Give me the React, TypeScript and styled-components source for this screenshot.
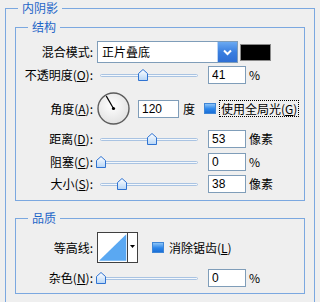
import styled, { createGlobalStyle } from 'styled-components';

const GlobalStyle = createGlobalStyle`
  html, body {
    margin: 0;
    padding: 0;
    background: #efefef;
    overflow: hidden;
  }
  body {
    font-family: "Noto Sans CJK SC", "Liberation Sans", sans-serif;
    font-size: 12px;
    line-height: 16px;
    color: #000;
  }
`;

const Page = styled.div`
  width: 320px;
  height: 302px;
  padding: 0 5px;
  box-sizing: border-box;
  overflow: hidden;
`;

const Group = styled.fieldset<{ $outer?: boolean }>`
  margin: 0;
  padding: 0;
  border: 1px solid #7ba8e0;
  min-width: 0;
  height: ${(p) => (p.$outer ? '304px' : 'auto')};
  box-sizing: border-box;
`;

const Legend = styled.legend`
  margin-left: 12px;
  padding: 0 4px;
  color: #1f66c8;
  font-size: 12px;
  line-height: 16px;
`;

const OuterBody = styled.div`
  display: flex;
  flex-direction: column;
  gap: 9px;
  padding: 3px 9px 0 9px;
`;

const Rows = styled.div<{ $top: number; $bottom: number }>`
  display: flex;
  flex-direction: column;
  padding: ${(p) => `${p.$top}px 0 ${p.$bottom}px 0`};
`;

const Row = styled.div<{ $gap?: number }>`
  display: flex;
  align-items: center;
  margin-top: ${(p) => p.$gap ?? 0}px;
`;

const Label = styled.div`
  width: 77px;
  margin-right: 4px;
  text-align: right;
  white-space: nowrap;
`;

const Key = styled.span`
  text-decoration: underline;
`;

const Select = styled.div`
  display: flex;
  width: 141px;
  height: 22px;
  box-sizing: border-box;
  border: 1px solid #7f9db9;
  background: #fff;
`;

const SelectText = styled.div`
  flex: 1;
  padding-left: 4px;
  line-height: 20px;
`;

const SelectButton = styled.div`
  width: 19px;
  display: flex;
  align-items: center;
  justify-content: center;
  background: linear-gradient(#6aa9f2, #3a7fe0 50%, #2f6fd4);
  border-left: 1px solid #b9d4f5;
`;

const Swatch = styled.div`
  width: 31px;
  height: 17px;
  margin-left: 2px;
  box-sizing: border-box;
  border: 1px solid #8a8a8a;
  background: #000;
`;

const SliderBox = styled.div`
  position: relative;
  width: 111px;
  height: 18px;
`;

const Track = styled.div`
  position: absolute;
  left: 3px;
  right: 10px;
  top: 8px;
  height: 3px;
  box-sizing: border-box;
  border: 1px solid #a9c3e2;
  border-radius: 2px;
  background: #f4f8fc;
`;

const Thumb = styled.svg`
  position: absolute;
  top: -6px;
  margin-left: -5px;
`;

const NumBox = styled.input<{ $w?: number }>`
  width: ${(p) => p.$w ?? 38}px;
  height: 18px;
  box-sizing: border-box;
  margin: 0;
  padding: 0 0 0 3px;
  border: 1px solid #7f9db9;
  background: #fff;
  font-family: "Liberation Sans", Arial, sans-serif;
  font-size: 12px;
  color: #000;
  outline: none;
`;

const Unit = styled.span<{ $ml?: number }>`
  margin-left: ${(p) => p.$ml ?? 3}px;
  white-space: nowrap;
`;

const Dial = styled.svg`
  display: block;
  margin-right: 8px;
`;

const Check = styled.div<{ $ml: number }>`
  width: 12px;
  height: 11px;
  margin-left: ${(p) => p.$ml}px;
  box-sizing: border-box;
  border: 1px solid #3f86d6;
  background: linear-gradient(#8cc4f7, #2c86ea 55%, #1b6fd6);
`;

const CheckLabel = styled.span<{ $focus?: boolean }>`
  margin-left: 3px;
  padding: 0 1px;
  border: 1px ${(p) => (p.$focus ? 'dotted #000' : 'solid transparent')};
  white-space: nowrap;
  line-height: 15px;
`;

const Contour = styled.div`
  display: flex;
  width: 41px;
  height: 31px;
  box-sizing: border-box;
  border: 1px solid #404040;
  background: #fff;
`;

const ContourGraph = styled.svg`
  display: block;
`;

const ContourArrow = styled.div`
  width: 10px;
  border-left: 1px solid #404040;
  display: flex;
  justify-content: center;
  padding-top: 12px;
  box-sizing: border-box;
`;

const SliderControl = ({ value, max }: { value: number; max: number }) => (
  <SliderBox>
    <Track>
      <Thumb width="10" height="12" viewBox="0 0 10 12" style={{ left: `${(value / max) * 100}%` }}>
        <defs>
          <linearGradient id="tg" x1="0" y1="0" x2="0" y2="1">
            <stop offset="0" stopColor="#ffffff" />
            <stop offset="1" stopColor="#b6d5f6" />
          </linearGradient>
        </defs>
        <path d="M0.5 4.5 L5 0.5 L9.5 4.5 V11.5 H0.5 Z" fill="url(#tg)" stroke="#2f73d2" />
      </Thumb>
    </Track>
  </SliderBox>
);

export default function App() {
  return (
    <Page>
      <GlobalStyle />
      <Group $outer>
        <Legend>内阴影</Legend>
        <OuterBody>
          <Group>
            <Legend>结构</Legend>
            <Rows $top={6} $bottom={7}>
              <Row>
                <Label>混合模式:</Label>
                <Select>
                  <SelectText>正片叠底</SelectText>
                  <SelectButton>
                    <svg width="9" height="7" viewBox="0 0 9 7">
                      <path d="M1 1.5 L4.5 5 L8 1.5" fill="none" stroke="#fff" strokeWidth="2" />
                    </svg>
                  </SelectButton>
                </Select>
                <Swatch />
              </Row>
              <Row $gap={3}>
                <Label>
                  不透明度(<Key>O</Key>):
                </Label>
                <SliderControl value={44} max={100} />
                <NumBox readOnly value="41" />
                <Unit>%</Unit>
              </Row>
              <Row $gap={8}>
                <Label>
                  角度(<Key>A</Key>):
                </Label>
                <Dial width="33" height="33" viewBox="0 0 33 33">
                  <defs>
                    <radialGradient id="dg" cx="0.45" cy="0.4" r="0.6">
                      <stop offset="0" stopColor="#ffffff" />
                      <stop offset="1" stopColor="#e2e2e2" />
                    </radialGradient>
                  </defs>
                  <circle cx="16.5" cy="16.5" r="15.5" fill="url(#dg)" stroke="#5c5c5c" strokeWidth="1.4" />
                  <line x1="16.5" y1="16.5" x2="9.3" y2="4.1" stroke="#000" strokeWidth="1.2" />
                  <circle cx="16.5" cy="16.5" r="1.6" fill="#000" />
                </Dial>
                <NumBox readOnly value="120" $w={41} />
                <Unit $ml={4}>度</Unit>
                <Check $ml={9} />
                <CheckLabel $focus>
                  使用全局光(<Key>G</Key>)
                </CheckLabel>
              </Row>
              <Row $gap={5}>
                <Label>
                  距离(<Key>D</Key>):
                </Label>
                <SliderControl value={53} max={100} />
                <NumBox readOnly value="53" />
                <Unit>像素</Unit>
              </Row>
              <Row $gap={5}>
                <Label>
                  阻塞(<Key>C</Key>):
                </Label>
                <SliderControl value={0} max={100} />
                <NumBox readOnly value="0" />
                <Unit>%</Unit>
              </Row>
              <Row $gap={4}>
                <Label>
                  大小(<Key>S</Key>):
                </Label>
                <SliderControl value={22} max={100} />
                <NumBox readOnly value="38" />
                <Unit>像素</Unit>
              </Row>
            </Rows>
          </Group>
          <Group>
            <Legend>品质</Legend>
            <Rows $top={6} $bottom={6}>
              <Row>
                <Label>等高线:</Label>
                <Contour>
                  <ContourGraph width="30" height="29" viewBox="0 0 30 29">
                    <polygon points="1,28 29,1 29,28" fill="#5aa8f2" />
                  </ContourGraph>
                  <ContourArrow>
                    <svg width="5" height="3" viewBox="0 0 5 3">
                      <path d="M0 0 H5 L2.5 3 Z" fill="#000" />
                    </svg>
                  </ContourArrow>
                </Contour>
                <Check $ml={14} />
                <CheckLabel>
                  消除锯齿(<Key>L</Key>)
                </CheckLabel>
              </Row>
              <Row $gap={6}>
                <Label>
                  杂色(<Key>N</Key>):
                </Label>
                <SliderControl value={0} max={100} />
                <NumBox readOnly value="0" />
                <Unit>%</Unit>
              </Row>
            </Rows>
          </Group>
        </OuterBody>
      </Group>
    </Page>
  );
}
